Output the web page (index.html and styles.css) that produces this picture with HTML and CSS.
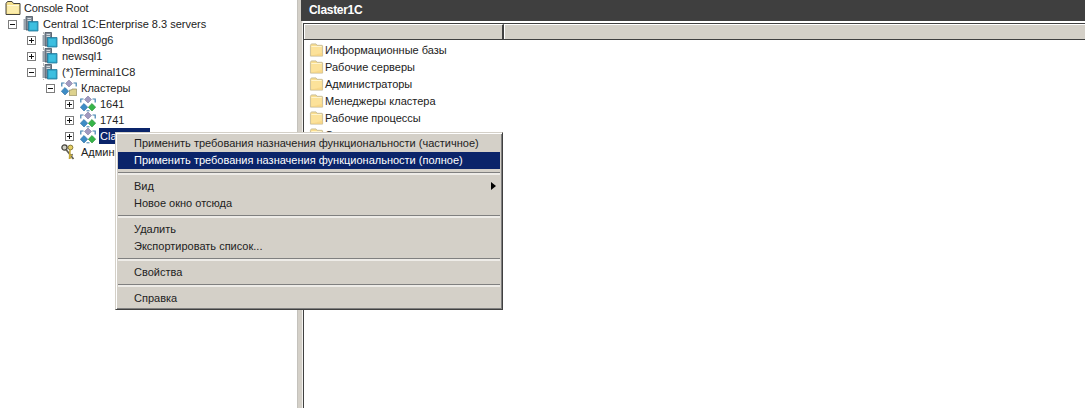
FILE: index.html
```html
<!DOCTYPE html>
<html lang="ru">
<head>
<meta charset="utf-8">
<title>Claster1C</title>
<link rel="stylesheet" href="styles.css">
</head>
<body>
<svg class="defs" width="0" height="0" aria-hidden="true">
  <defs>
    <symbol id="folder" viewBox="0 0 16 16">
      <path d="M1.5 3 L2.5 1.5 H7.5 L8.5 3 H14 L14.5 3.5 V14.5 H1.5 Z" fill="#f9dd8e" stroke="#c8bd9a"/>
      <path d="M2.5 3.8 H13.5 V5 H2.5 Z" fill="#fff6d2"/>
      <path d="M2.5 5.5 H13.5 V13.5 H2.5 Z" fill="#fce29a"/>
      <path d="M2 14 H14.5 V11 Z" fill="#f6d27e" opacity=".6"/>
    </symbol>
    <symbol id="root" viewBox="0 0 16 16">
      <path d="M1 3.5 L2.5 1.5 H7 L8.5 3.5 H15 V14.5 H1 Z" fill="#f4df8a" stroke="#45433c"/>
      <path d="M2.2 5 H13.8 V13.3 H2.2 Z" fill="#fcedac"/>
      <path d="M2.2 5 H13.8 V6 H2.2 Z" fill="#fff8d8"/>
    </symbol>
    <symbol id="server" viewBox="0 0 16 16">
      <path d="M3 .5 H9.5 V14 H3 Z" fill="#7f8a96" stroke="#47525e" stroke-width=".8"/>
      <path d="M4.5 2 H8 V3 H4.5 Z M4.5 4 H8 V5 H4.5 Z" fill="#d5dbe0"/>
      <path d="M.5 3 H3 V14 H.5 Z" fill="#98a2ac"/>
      <path d="M5.5 5.5 H15 V15 H5.5 Z" fill="#2fa5c8" stroke="#25799a" stroke-width=".8"/>
      <path d="M6.8 7 H13.7 V13.7 H6.8 Z" fill="#3dbfe0"/>
    </symbol>
    <symbol id="cluster" viewBox="0 0 16 16">
      <path d="M8 0 L11.5 3.5 L8 7 L4.5 3.5 Z" fill="#a09ac0" stroke="#7f79a0" stroke-width=".6"/>
      <path d="M4 7.5 L7.7 11.2 L4 15 L.3 11.2 Z" fill="#3e8cc6" stroke="#2a6c9e" stroke-width=".6"/>
      <path d="M12 7.5 L15.7 11.2 L12 15 L8.3 11.2 Z" fill="#36b549" stroke="#278c37" stroke-width=".6"/>
      <path d="M.8 6.5 V3 H3.5 M12.5 3 H15.2 V6.5" stroke="#3f80b0" stroke-width="1.2" fill="none"/>
      <path d="M6.5 14.8 H9.5" stroke="#3f80b0" stroke-width="1"/>
    </symbol>
    <symbol id="clusters" viewBox="0 0 16 16">
      <path d="M8 0 L11.5 3.5 L8 7 L4.5 3.5 Z" fill="#a09ac0" stroke="#7f79a0" stroke-width=".6"/>
      <path d="M4 7.5 L7.7 11.2 L4 15 L.3 11.2 Z" fill="#3e8cc6" stroke="#2a6c9e" stroke-width=".6"/>
      <path d="M.8 6.5 V3 H3.5 M12.5 3 H15.2 V6.5" stroke="#3f80b0" stroke-width="1.2" fill="none"/>
      <path d="M8.5 10 H10.5 L11 9 H15.7 V15.7 H8.5 Z" fill="#ddd28e" stroke="#8d8760" stroke-width=".7"/>
    </symbol>
    <symbol id="keys" viewBox="0 0 16 16">
      <circle cx="3.5" cy="3.5" r="2.6" fill="#cfcfc6" stroke="#45433c" stroke-width="1.3"/>
      <path d="M5 5.5 L12.5 15 M9.5 11.5 L11.8 10.5" stroke="#5f5e54" stroke-width="1.7" fill="none"/>
      <circle cx="9.5" cy="3.5" r="2.4" fill="#e6cf62" stroke="#6e6226" stroke-width=".8"/>
      <path d="M9 6 L8.5 15 M8.8 11 L11 11.5 M8.6 13.5 L10.6 14" stroke="#c4a838" stroke-width="1.6" fill="none"/>
    </symbol>
  </defs>
</svg>

<div class="console">
  <nav class="tree">
    <div class="row level-root">
      <svg class="icon"><use href="#root"/></svg><span class="label">Console Root</span>
    </div>
    <div class="row level-1">
      <span class="box minus"></span>
      <svg class="icon"><use href="#server"/></svg><span class="label">Central 1C:Enterprise 8.3 servers</span>
    </div>
    <div class="row level-2">
      <span class="box plus"></span>
      <svg class="icon"><use href="#server"/></svg><span class="label">hpdl360g6</span>
    </div>
    <div class="row level-2">
      <span class="box plus"></span>
      <svg class="icon"><use href="#server"/></svg><span class="label">newsql1</span>
    </div>
    <div class="row level-2">
      <span class="box minus"></span>
      <svg class="icon"><use href="#server"/></svg><span class="label">(*)Terminal1C8</span>
    </div>
    <div class="row level-3">
      <span class="box minus"></span>
      <svg class="icon"><use href="#clusters"/></svg><span class="label">Кластеры</span>
    </div>
    <div class="row level-4">
      <span class="box plus"></span>
      <svg class="icon"><use href="#cluster"/></svg><span class="label">1641</span>
    </div>
    <div class="row level-4">
      <span class="box plus"></span>
      <svg class="icon"><use href="#cluster"/></svg><span class="label">1741</span>
    </div>
    <div class="row level-4">
      <span class="box plus"></span>
      <svg class="icon"><use href="#cluster"/></svg><span class="label selected">Claster1C</span>
    </div>
    <div class="row level-3 leaf">
      <svg class="icon"><use href="#keys"/></svg><span class="label">Администраторы</span>
    </div>
  </nav>

  <div class="splitter"></div>

  <main class="detail">
    <header class="title">Claster1C</header>
    <div class="listview">
      <div class="columns">
        <div class="column first"></div>
        <div class="column rest"></div>
      </div>
      <ul class="items">
        <li class="item"><svg class="folder"><use href="#folder"/></svg>Информационные базы</li>
        <li class="item"><svg class="folder"><use href="#folder"/></svg>Рабочие серверы</li>
        <li class="item"><svg class="folder"><use href="#folder"/></svg>Администраторы</li>
        <li class="item"><svg class="folder"><use href="#folder"/></svg>Менеджеры кластера</li>
        <li class="item"><svg class="folder"><use href="#folder"/></svg>Рабочие процессы</li>
        <li class="item"><svg class="folder"><use href="#folder"/></svg>Сеансы</li>
      </ul>
    </div>
  </main>
</div>

<div class="menu" role="menu">
  <div class="menu-item">Применить требования назначения функциональности (частичное)</div>
  <div class="menu-item active">Применить требования назначения функциональности (полное)</div>
  <div class="menu-sep"></div>
  <div class="menu-item">Вид<span class="arrow"></span></div>
  <div class="menu-item">Новое окно отсюда</div>
  <div class="menu-sep"></div>
  <div class="menu-item">Удалить</div>
  <div class="menu-item">Экспортировать список...</div>
  <div class="menu-sep"></div>
  <div class="menu-item">Свойства</div>
  <div class="menu-sep"></div>
  <div class="menu-item">Справка</div>
</div>
</body>
</html>
```

FILE: styles.css
```css
* { box-sizing: border-box; }

html, body {
  margin: 0;
  height: 100%;
  overflow: hidden;
  background: #fff;
}

body {
  font: 11px/16px "Liberation Sans", Arial, sans-serif;
  color: #222;
}

.defs { position: absolute; }

.console {
  display: flex;
  height: 408px;
}

/* tree pane */
.tree {
  width: 298px;
  flex: none;
  border-right: 1px solid #c4c2bc;
  background: #fff;
}

.row {
  position: relative;
  display: flex;
  align-items: center;
  height: 16px;
  white-space: nowrap;
}

.level-root { padding-left: 5px; }
.level-root .label { margin-left: 2px; letter-spacing: -0.2px; }
.level-1 { padding-left: 8px; }
.level-2 { padding-left: 27px; }
.level-3 { padding-left: 46px; }
.level-4 { padding-left: 65px; }
.level-3.leaf { padding-left: 61px; }

.level-2::before {
  content: "";
  position: absolute;
  left: 43px;
  top: 0;
  height: 16px;
  border-left: 1px dotted #b8b8b8;
}

.box {
  position: relative;
  width: 9px;
  height: 9px;
  flex: none;
  margin-right: 6px;
  border: 1px solid #7d7d7d;
  background: #fff;
}

.box::before {
  content: "";
  position: absolute;
  left: 1px;
  top: 3px;
  width: 5px;
  height: 1px;
  background: #111;
}

.box.plus::after {
  content: "";
  position: absolute;
  left: 3px;
  top: 1px;
  width: 1px;
  height: 5px;
  background: #111;
}

.icon {
  position: relative;
  width: 16px;
  height: 16px;
  flex: none;
}

.label {
  margin-left: 3px;
  padding: 0 1px;
}

.selected {
  width: 51px;
  overflow: hidden;
  height: 16px;
  background: #0a246a;
  color: #fff;
}

/* splitter */
.splitter {
  width: 5px;
  flex: none;
  background: #d4d0c8;
  border-right: 1px solid #f4f3f0;
}

/* details pane */
.detail {
  flex: 1;
  min-width: 0;
  display: flex;
  flex-direction: column;
}

.title {
  height: 21px;
  margin-left: -2px;
  padding-left: 8px;
  background: #3f3f3f;
  color: #fff;
  font-weight: 700;
  font-size: 12px;
  line-height: 20px;
  letter-spacing: -0.3px;
}

.listview {
  flex: 1;
  margin-top: 2px;
  border-left: 1px solid #404040;
  border-top: 1px solid #404040;
}

.columns {
  display: flex;
  height: 16px;
  border-bottom: 1px solid #404040;
  background: #d4d0c8;
}

.column {
  border-top: 1px solid #fff;
  border-left: 1px solid #fff;
}

.column.first {
  width: 200px;
  border-right: 2px solid #404040;
}

.column.rest { flex: 1; }

.items {
  list-style: none;
  margin: 0;
  padding: 1px 0 0 5px;
}

.item {
  display: flex;
  align-items: center;
  gap: 1px;
  height: 17px;
}

.folder {
  width: 15px;
  height: 16px;
  flex: none;
}

/* context menu */
.menu {
  position: absolute;
  left: 115px;
  top: 132px;
  width: 388px;
  height: 178px;
  padding: 2px;
  background: #d4d0c8;
  border: 1px solid;
  border-color: #d4d0c8 #404040 #404040 #d4d0c8;
  box-shadow: inset 1px 1px 0 #fff, inset -1px -1px 0 #808080;
}

.menu-item {
  position: relative;
  height: 17px;
  line-height: 17px;
  padding-left: 16px;
  white-space: nowrap;
}

.menu-item.active {
  background: #0a246a;
  color: #fff;
}

.menu-sep {
  height: 9px;
  padding-top: 3px;
}

.menu-sep::before {
  content: "";
  display: block;
  height: 2px;
  background: #eeece8;
  border-top: 1px solid #808080;
}

.arrow {
  position: absolute;
  right: 4px;
  top: 4px;
  border-left: 5px solid #000;
  border-top: 4px solid transparent;
  border-bottom: 4px solid transparent;
}
```
